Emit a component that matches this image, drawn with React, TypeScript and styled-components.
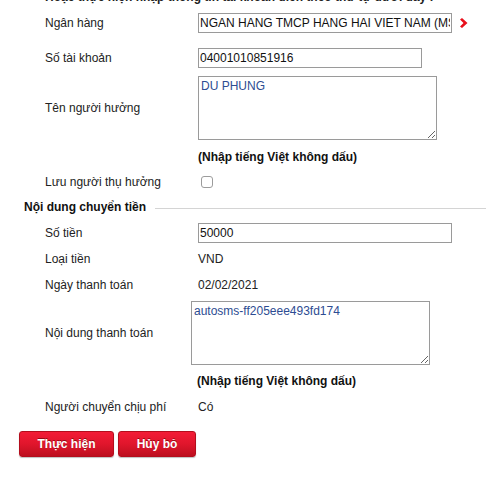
import React from "react";
import styled, { createGlobalStyle } from "styled-components";

const Global = createGlobalStyle`
  html, body { margin: 0; padding: 0; background: #fff; overflow: hidden; }
  body { font-family: "Liberation Sans", Arial, sans-serif; font-size: 12px; color: #222; }
`;

const Page = styled.div`
  width: 486px;
  height: 478px;
  overflow: hidden;
  position: relative;
`;

const Scroller = styled.div`
  margin-top: -10px;
  display: flex;
  flex-direction: column;
`;

const Intro = styled.div`
  padding-left: 45px;
  font-weight: bold;
  line-height: 14px;
  height: 14px;
  white-space: nowrap;
`;

const Row = styled.div<{ $h: number; $mt: number; $col?: number }>`
  display: grid;
  grid-template-columns: ${(p) => p.$col ?? 153}px 1fr;
  align-items: center;
  padding-left: 45px;
  height: ${(p) => p.$h}px;
  margin-top: ${(p) => p.$mt}px;
  line-height: 14px;
`;

const Label = styled.div`
  color: #222;
  white-space: nowrap;
`;

const Value = styled.div`
  display: flex;
  align-items: center;
  gap: 8px;
  color: #222;
`;

const TextInput = styled.input<{ $w: number }>`
  box-sizing: border-box;
  width: ${(p) => p.$w}px;
  height: 20px;
  border: 1px solid #9a9a9a;
  padding: 0 1px;
  margin: 0;
  font-family: "Liberation Sans", Arial, sans-serif;
  font-size: 12px;
  color: #111;
  background: #fff;
  outline: none;
`;

const Area = styled.textarea<{ $w: number }>`
  box-sizing: border-box;
  width: ${(p) => p.$w}px;
  height: 64px;
  border: 1px solid #9a9a9a;
  padding: 2px 2px;
  margin: 0;
  font-family: "Liberation Sans", Arial, sans-serif;
  font-size: 12px;
  line-height: 15px;
  color: #2d4c92;
  background: #fff;
  outline: none;
  resize: both;
  display: block;
`;

const Hint = styled.div`
  font-weight: bold;
  color: #111;
  white-space: nowrap;
`;

const Check = styled.span`
  display: inline-block;
  box-sizing: border-box;
  width: 12px;
  height: 12px;
  margin-left: 3px;
  border: 1px solid #9c9c9c;
  border-radius: 3px;
  background: #fff;
`;

const Section = styled.div`
  display: flex;
  align-items: center;
  padding-left: 24px;
  height: 18px;
  margin-top: 7px;
  font-weight: bold;
  color: #111;
  line-height: 14px;
`;

const SectionLine = styled.div`
  flex: 1;
  height: 1px;
  background: #d4d4d4;
  margin-left: 9px;
  margin-top: 2px;
`;

const Buttons = styled.div`
  display: flex;
  gap: 4px;
  padding-left: 19px;
  margin-top: 15px;
`;

const Button = styled.button<{ $w: number }>`
  box-sizing: border-box;
  width: ${(p) => p.$w}px;
  height: 26px;
  border: 1px solid #b30e1d;
  border-radius: 3px;
  background: linear-gradient(to bottom, #f31c36 0%, #e0162c 50%, #bd0f1f 100%);
  box-shadow: 0 1px 1px rgba(0, 0, 0, 0.25);
  color: #fff;
  font-family: "Liberation Sans", Arial, sans-serif;
  font-size: 12px;
  font-weight: bold;
  text-shadow: 0 -1px 0 rgba(90, 0, 0, 0.6);
  padding: 0;
  cursor: pointer;
`;

const Arrow = () => (
  <svg width="8" height="10" viewBox="0 0 8 10" style={{ display: "block" }}>
    <polygon points="0,1.5 2,0 7.5,5 2,10 0,8.5 3.5,5" fill="#e8101c" />
  </svg>
);

export default function App() {
  return (
    <Page>
      <Global />
      <Scroller>
        <Intro>Hoặc thực hiện nhập thông tin tài khoản đích theo thứ tự dưới đây :</Intro>

        <Row $h={26} $mt={6}>
          <Label>Ngân hàng</Label>
          <Value>
            <TextInput $w={254} readOnly defaultValue="NGAN HANG TMCP HANG HAI VIET NAM (MSB)" />
            <Arrow />
          </Value>
        </Row>

        <Row $h={26} $mt={9}>
          <Label>Số tài khoản</Label>
          <Value>
            <TextInput $w={224} readOnly defaultValue="04001010851916" />
          </Value>
        </Row>

        <Row $h={64} $mt={5}>
          <Label>Tên người hưởng</Label>
          <Value>
            <Area $w={239} readOnly defaultValue="DU PHUNG" />
          </Value>
        </Row>

        <Row $h={18} $mt={8}>
          <Label />
          <Hint>(Nhập tiếng Việt không dấu)</Hint>
        </Row>

        <Row $h={18} $mt={7}>
          <Label>Lưu người thụ hưởng</Label>
          <Value>
            <Check />
          </Value>
        </Row>

        <Section>
          Nội dung chuyển tiền
          <SectionLine />
        </Section>

        <Row $h={26} $mt={4}>
          <Label>Số tiền</Label>
          <Value>
            <TextInput $w={254} readOnly defaultValue="50000" />
          </Value>
        </Row>

        <Row $h={18} $mt={4}>
          <Label>Loại tiền</Label>
          <Value>VND</Value>
        </Row>

        <Row $h={18} $mt={8}>
          <Label>Ngày thanh toán</Label>
          <Value>02/02/2021</Value>
        </Row>

        <Row $h={64} $mt={7} $col={146}>
          <Label>Nội dung thanh toán</Label>
          <Value>
            <Area $w={239} readOnly defaultValue="autosms-ff205eee493fd174" />
          </Value>
        </Row>

        <Row $h={18} $mt={7} $col={152}>
          <Label />
          <Hint>(Nhập tiếng Việt không dấu)</Hint>
        </Row>

        <Row $h={18} $mt={8}>
          <Label>Người chuyển chịu phí</Label>
          <Value>Có</Value>
        </Row>

        <Buttons>
          <Button $w={95}>Thực hiện</Button>
          <Button $w={78}>Hủy bỏ</Button>
        </Buttons>
      </Scroller>
    </Page>
  );
}
